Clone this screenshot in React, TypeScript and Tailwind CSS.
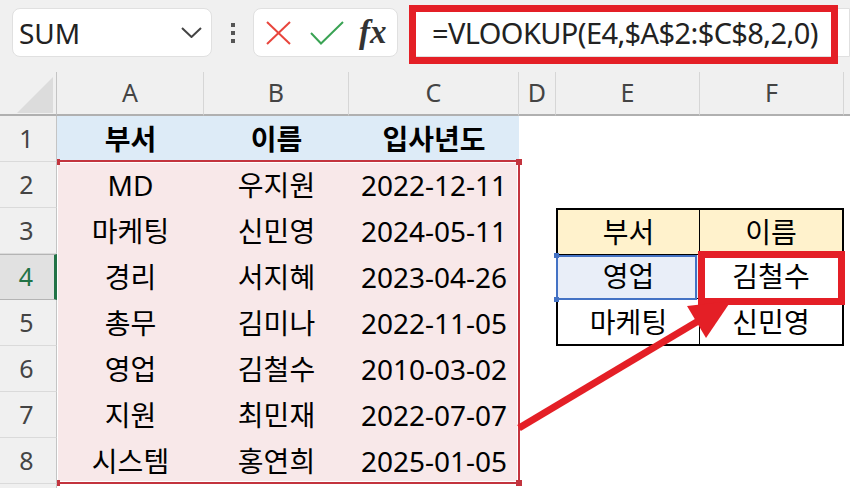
import React from "react";

const data: string[][] = [
  ["MD", "우지원", "2022-12-11"],
  ["마케팅", "신민영", "2024-05-11"],
  ["경리", "서지혜", "2023-04-26"],
  ["총무", "김미나", "2022-11-05"],
  ["영업", "김철수", "2010-03-02"],
  ["지원", "최민재", "2022-07-07"],
  ["시스템", "홍연희", "2025-01-05"],
];

function RowHeader({ n }: { n: number }) {
  if (n === 4) {
    return (
      <div className="relative z-10 flex items-center justify-center bg-[#e1e1e1] border-y border-[#b4b4b4] border-r-[3px] border-r-[#217346] text-[25px] text-[#217346] pr-[2px]">
        {n}
      </div>
    );
  }
  return (
    <div className="relative z-10 flex items-center justify-center bg-[#f0f0f0] border-b border-[#dadada] border-r border-r-[#c4c4c4] text-[25px] text-[#444] pr-[3px]">
      {n < 9 ? n : ""}
    </div>
  );
}

function ColHeader({ label, last }: { label: string; last?: boolean }) {
  return (
    <div
      className={
        "flex items-center justify-center bg-[#f0f0f0] border-b-2 border-b-[#b0b0b0] text-[25px] text-[#444] " +
        (last ? "" : "border-r border-r-[#d6d6d6]")
      }
    >
      {label}
    </div>
  );
}

export default function App() {
  const sheetRows: React.ReactNode[] = [];
  for (let r = 1; r <= 9; r++) {
    sheetRows.push(<RowHeader key={"h" + r} n={r} />);
    for (let c = 0; c < 3; c++) {
      if (r === 1) {
        const t = ["부서", "이름", "입사년도"][c];
        sheetRows.push(
          <div key={r + "-" + c} className="flex items-center justify-center bg-[#ddebf7] font-bold text-[28px] text-black">
            {t}
          </div>
        );
      } else if (r <= 8) {
        sheetRows.push(
          <div key={r + "-" + c} className="flex items-center justify-center bg-[#f8e8e9] text-[28px] text-black">
            {data[r - 2][c]}
          </div>
        );
      } else {
        sheetRows.push(<div key={r + "-" + c} className="bg-white" />);
      }
    }
    sheetRows.push(<div key={r + "-d"} className="bg-white" />);
    if (r < 3 || r > 5) {
      sheetRows.push(<div key={r + "-e"} className="bg-white" />);
      sheetRows.push(<div key={r + "-f"} className="bg-white" />);
    }
    sheetRows.push(<div key={r + "-x"} className="bg-white" />);
  }

  return (
    <div className="relative w-[850px] h-[488px] overflow-hidden bg-white font-['Noto_Sans','Noto_Sans_CJK_KR',sans-serif]">
      {/* Toolbar */}
      <div className="flex h-[72px] items-start bg-[#f0f0f0] pl-[12px]">
        <div className="mt-[8px] flex h-[49px] w-[200px] items-center justify-between rounded-lg border border-[#e0e0e0] bg-white pl-[6px] pr-[9px]">
          <span className="text-[28px] text-[#222] leading-none">SUM</span>
          <svg width="21" height="11" viewBox="0 0 21 11">
            <polyline points="1,1 10.5,10 20,1" fill="none" stroke="#444" strokeWidth="2" />
          </svg>
        </div>
        <div className="ml-[19px] mt-[23px] flex flex-col gap-[4px]">
          <div className="h-[4px] w-[4px] bg-[#555]" />
          <div className="h-[4px] w-[4px] bg-[#555]" />
          <div className="h-[4px] w-[4px] bg-[#555]" />
        </div>
        <div className="ml-[18px] mt-[8px] flex h-[49px] w-[145px] items-center rounded-lg border border-[#e0e0e0] bg-white pl-[12px]">
          <svg width="25" height="24" viewBox="0 0 25 24">
            <line x1="1" y1="1" x2="24" y2="23" stroke="#e8453c" strokeWidth="2" />
            <line x1="24" y1="1" x2="1" y2="23" stroke="#e8453c" strokeWidth="2" />
          </svg>
          <svg width="34" height="24" viewBox="0 0 34 24" className="ml-[19px]">
            <polyline points="1,12 11,22.5 33,1" fill="none" stroke="#3aa354" strokeWidth="2" />
          </svg>
          <span className="ml-[15px] font-['Liberation_Serif',serif] italic font-bold text-[33px] leading-none text-[#333]">fx</span>
        </div>
        <div className="relative ml-[11px] mt-[8px] flex h-[49px] flex-1 items-center rounded-l-lg border border-[#e0e0e0] bg-white pl-[22px]">
          <span className="text-[29px] tracking-[-0.6px] text-[#222] leading-none">=VLOOKUP(E4,$A$2:$C$8,2,0)</span>
          <div className="absolute left-[-1px] top-[-4px] h-[59px] w-[429px] border-[7px] border-[#e41f26]" />
        </div>
      </div>

      {/* Sheet grid */}
      <div className="relative grid grid-cols-[57px_147px_145px_170px_37px_144px_144px_1fr] grid-rows-[44px_repeat(9,46px)]">
        <div className="relative bg-[#f0f0f0] border-b-2 border-b-[#b0b0b0] border-r border-r-[#c4c4c4]">
          <svg width="57" height="44" viewBox="0 0 57 44" className="absolute left-0 top-0">
            <polygon points="17,41 53,41 53,5" fill="#dcdcdc" />
          </svg>
        </div>
        <ColHeader label="A" />
        <ColHeader label="B" />
        <ColHeader label="C" />
        <ColHeader label="D" />
        <ColHeader label="E" />
        <ColHeader label="F" />
        <ColHeader label="" last />

        {/* Lookup table E3:F5 */}
        <div className="col-start-6 col-span-2 row-start-4 row-span-3 grid grid-cols-2 grid-rows-3 border-2 border-black text-[28px] text-black">
          <div className="flex items-center justify-center bg-[#fff2cc] border-r-[1.5px] border-b border-black">부서</div>
          <div className="flex items-center justify-center bg-[#fff2cc] border-b border-black">이름</div>
          <div className="relative flex items-center justify-center bg-[#e9eef8] border-r-[1.5px] border-b border-black">
            영업
            <div className="absolute left-[-2px] top-0 right-[2px] bottom-[-2px] border-2 border-[#4472c4]" />
            <div className="absolute left-[-4px] top-[-2px] h-[5px] w-[5px] bg-[#4472c4]" />
            <div className="absolute left-[-4px] bottom-[-4px] h-[5px] w-[5px] bg-[#4472c4]" />
          </div>
          <div className="flex items-center justify-center bg-white border-b border-black">김철수</div>
          <div className="flex items-center justify-center bg-white border-r-[1.5px] border-black">마케팅</div>
          <div className="flex items-center justify-center bg-white">신민영</div>
        </div>

        {sheetRows}

        {/* Range reference highlight A2:C8 */}
        <div className="pointer-events-none absolute left-[55px] top-[88px] h-[324px] w-[465px] border-2 border-[#c3343e]">
          <div className="h-full w-full border border-white" />
          <div className="absolute right-[-4px] top-[-3px] h-[6px] w-[6px] bg-[#c3343e]" />
          <div className="absolute right-[-4px] bottom-[-4px] h-[6px] w-[6px] bg-[#c3343e]" />
          <div className="absolute left-[-3px] top-[-3px] h-[6px] w-[6px] bg-[#c3343e]" />
          <div className="absolute left-[-3px] bottom-[-4px] h-[6px] w-[6px] bg-[#c3343e]" />
        </div>
      </div>

      {/* Annotation: red box and arrow */}
      <div className="pointer-events-none absolute left-[698px] top-[251px] h-[54px] w-[147px] border-[7px] border-[#e41f26]" />
      <svg className="pointer-events-none absolute left-0 top-0" width="850" height="488" viewBox="0 0 850 488">
        <line x1="519" y1="428" x2="700" y2="320" stroke="#e41f26" strokeWidth="7" />
        <polygon points="731,301 687,306 706,338" fill="#e41f26" />
      </svg>
    </div>
  );
}
